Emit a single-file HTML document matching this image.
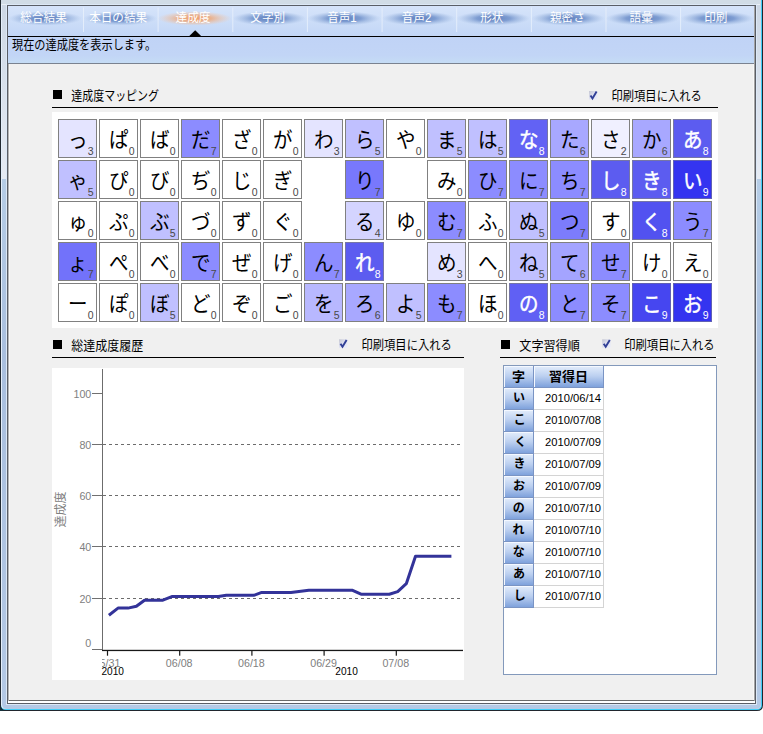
<!DOCTYPE html>
<html><head><meta charset="utf-8"><title>達成度</title><style>html,body{margin:0;padding:0;background:#fff;font-family:"Liberation Sans",sans-serif;}.j{font-family:"Liberation Sans","Noto Sans CJK JP",sans-serif;}</style></head><body><svg width="763" height="734" viewBox="0 0 763 734" style="display:block"><defs><linearGradient id="frv" gradientUnits="userSpaceOnUse" x1="0" y1="0" x2="0" y2="711"><stop offset="0" stop-color="#ccd7e5"/><stop offset="0.2517" stop-color="#e6ebf3"/><stop offset="0.2518" stop-color="#b6cde6"/><stop offset="0.5" stop-color="#a9bfde"/><stop offset="1" stop-color="#b4c9e5"/></linearGradient><linearGradient id="tabbg" x1="0" y1="0" x2="0" y2="1"><stop offset="0" stop-color="#d6e4fa"/><stop offset="1" stop-color="#c2d6f6"/></linearGradient><linearGradient id="infobg" x1="0" y1="0" x2="0" y2="1"><stop offset="0" stop-color="#c0d3f6"/><stop offset="0.7" stop-color="#c2d5f6"/><stop offset="1" stop-color="#c5dcf5"/></linearGradient><radialGradient id="glowb"><stop offset="0" stop-color="#5878b8" stop-opacity="0.95"/><stop offset="0.45" stop-color="#6a8cc8" stop-opacity="0.8"/><stop offset="0.8" stop-color="#90acd8" stop-opacity="0.35"/><stop offset="1" stop-color="#a8c0e8" stop-opacity="0"/></radialGradient><radialGradient id="glowo"><stop offset="0" stop-color="#f09860" stop-opacity="0.95"/><stop offset="0.45" stop-color="#f0a878" stop-opacity="0.8"/><stop offset="0.8" stop-color="#f0c0a0" stop-opacity="0.35"/><stop offset="1" stop-color="#f0c8b0" stop-opacity="0"/></radialGradient><linearGradient id="cb589" x1="0" y1="0" x2="1" y2="1"><stop offset="0" stop-color="#c4c6d2"/><stop offset="0.5" stop-color="#e0e2f2"/><stop offset="1" stop-color="#eceefa"/></linearGradient><linearGradient id="cb339" x1="0" y1="0" x2="1" y2="1"><stop offset="0" stop-color="#c4c6d2"/><stop offset="0.5" stop-color="#e0e2f2"/><stop offset="1" stop-color="#eceefa"/></linearGradient><linearGradient id="cb602" x1="0" y1="0" x2="1" y2="1"><stop offset="0" stop-color="#c4c6d2"/><stop offset="0.5" stop-color="#e0e2f2"/><stop offset="1" stop-color="#eceefa"/></linearGradient><linearGradient id="hd" x1="0" y1="0" x2="0" y2="1"><stop offset="0" stop-color="#dfeafa"/><stop offset="0.45" stop-color="#bcd0f0"/><stop offset="1" stop-color="#7fa2dc"/></linearGradient></defs><rect x="0" y="0" width="763" height="734" fill="#fff"/><rect x="0" y="704" width="7" height="7" fill="#17343e"/><path d="M0 0 H763 V705 Q763 711 757 711 H6 Q0 711 0 705 Z" fill="#20262e"/><path d="M1 0 H762 V705 Q762 710 757 710 H6 Q1 710 1 705 Z" fill="#40cdf6"/><path d="M1 0 H761 V704.5 Q761 709 756.5 709 H6 Q1 709 1 704.5 Z" fill="#e4eefa"/><path d="M2 0 H761 V704 Q761 709 756 709 H7 Q2 709 2 704 Z" fill="url(#frv)"/><rect x="0" y="0" width="1" height="705" fill="#222a32"/><rect x="1" y="0" width="760" height="4" fill="#d1dce6"/><rect x="2" y="4" width="758" height="1" fill="#e9eff5"/><rect x="6" y="4" width="751" height="701" fill="#dce8f6"/><rect x="7" y="5" width="749" height="699" fill="#5a5e66"/><rect x="8" y="6" width="747" height="697" fill="#fff"/><rect x="8" y="6" width="747" height="694" fill="#f0f0f0"/><rect x="8" y="700" width="747" height="1" fill="#6a6a6a"/><rect x="8" y="6" width="1" height="695" fill="#b4b4b4"/><rect x="9" y="64" width="1" height="636" fill="#f8f8f8"/><rect x="754" y="6" width="1" height="695" fill="#a4a4a4"/><rect x="753" y="64" width="1" height="636" fill="#f8f8f8"/><rect x="8" y="6" width="746" height="30" fill="url(#tabbg)"/><rect x="8" y="36" width="746" height="1" fill="#000"/><rect x="8" y="37" width="746" height="26" fill="url(#infobg)"/><rect x="8" y="63" width="746" height="1" fill="#7a8290"/><ellipse cx="45.4" cy="18.4" rx="37" ry="7.2" fill="url(#glowb)"/><text class="j" transform="translate(20.33,22.40) scale(0.9677,1)" font-size="12" fill="#fff">総合結果</text><rect x="83.0" y="7.5" width="1" height="24.5" fill="#e8f0fc" opacity="0.85"/><ellipse cx="120.1" cy="18.4" rx="37" ry="7.2" fill="url(#glowb)"/><text class="j" transform="translate(89.15,22.40) scale(0.9677,1)" font-size="12" fill="#fff">本日の結果</text><rect x="157.6" y="7.5" width="1" height="24.5" fill="#e8f0fc" opacity="0.85"/><ellipse cx="194.7" cy="18.4" rx="37" ry="7.2" fill="url(#glowo)"/><text class="j" transform="translate(175.62,22.40) scale(0.9677,1)" font-size="12" fill="#fff">達成度</text><rect x="232.3" y="7.5" width="1" height="24.5" fill="#e8f0fc" opacity="0.85"/><ellipse cx="269.4" cy="18.4" rx="37" ry="7.2" fill="url(#glowb)"/><text class="j" transform="translate(250.28,22.40) scale(0.9677,1)" font-size="12" fill="#fff">文字別</text><rect x="306.9" y="7.5" width="1" height="24.5" fill="#e8f0fc" opacity="0.85"/><ellipse cx="344.0" cy="18.4" rx="37" ry="7.2" fill="url(#glowb)"/><text class="j" transform="translate(327.15,22.40) scale(0.9677,1)" font-size="12" fill="#fff">音声1</text><rect x="381.6" y="7.5" width="1" height="24.5" fill="#e8f0fc" opacity="0.85"/><ellipse cx="418.7" cy="18.4" rx="37" ry="7.2" fill="url(#glowb)"/><text class="j" transform="translate(401.80,22.40) scale(0.9677,1)" font-size="12" fill="#fff">音声2</text><rect x="456.2" y="7.5" width="1" height="24.5" fill="#e8f0fc" opacity="0.85"/><ellipse cx="493.3" cy="18.4" rx="37" ry="7.2" fill="url(#glowb)"/><text class="j" transform="translate(480.23,22.40) scale(0.9677,1)" font-size="12" fill="#fff">形状</text><rect x="530.9" y="7.5" width="1" height="24.5" fill="#e8f0fc" opacity="0.85"/><ellipse cx="568.0" cy="18.4" rx="37" ry="7.2" fill="url(#glowb)"/><text class="j" transform="translate(549.96,22.40) scale(0.9677,1)" font-size="12" fill="#fff">親密さ</text><rect x="605.5" y="7.5" width="1" height="24.5" fill="#e8f0fc" opacity="0.85"/><ellipse cx="642.6" cy="18.4" rx="37" ry="7.2" fill="url(#glowb)"/><text class="j" transform="translate(629.53,22.40) scale(0.9677,1)" font-size="12" fill="#fff">語彙</text><rect x="680.1" y="7.5" width="1" height="24.5" fill="#e8f0fc" opacity="0.85"/><ellipse cx="717.3" cy="18.4" rx="37" ry="7.2" fill="url(#glowb)"/><text class="j" transform="translate(704.18,22.40) scale(0.9677,1)" font-size="12" fill="#fff">印刷</text><path d="M189.3 36 L195.2 30.3 L201.1 36 Z" fill="#000"/><text class="j" transform="translate(12.00,48.80) scale(0.8886,1)" font-size="12.6" fill="#000">現在の達成度を表示します。</text><rect x="53" y="90" width="9" height="9" fill="#000"/><text class="j" transform="translate(71.30,99.50) scale(0.8436,1)" font-size="13" fill="#000">達成度マッピング</text><rect x="589" y="91" width="8.4" height="8.5" fill="url(#cb589)"/><path d="M590.5 95.4 L592.5 98.5 L596.6 91.6" fill="none" stroke="#303f96" stroke-width="1.9"/><text class="j" transform="translate(611.50,100.40) scale(0.8967,1)" font-size="12.6" fill="#000">印刷項目に入れる</text><rect x="52" y="107" width="666" height="1" fill="#000"/><rect x="52" y="112" width="666" height="216" fill="#fff"/><rect x="58.5" y="119.5" width="38" height="38" fill="#e4e4ff" stroke="#808080" stroke-width="1"/><text class="j" transform="translate(68.03,146.68) scale(0.9300,1)" font-size="21" fill="#000">っ</text><text x="93.5" y="154.5" font-size="10.5" text-anchor="end" fill="#484848" font-family="Liberation Sans, sans-serif">3</text><rect x="99.5" y="119.5" width="38" height="38" fill="#ffffff" stroke="#808080" stroke-width="1"/><text class="j" transform="translate(109.03,147.47) scale(0.9300,1)" font-size="21" fill="#000">ぱ</text><text x="134.5" y="154.5" font-size="10.5" text-anchor="end" fill="#484848" font-family="Liberation Sans, sans-serif">0</text><rect x="140.5" y="119.5" width="38" height="38" fill="#ffffff" stroke="#808080" stroke-width="1"/><text class="j" transform="translate(150.04,147.47) scale(0.9300,1)" font-size="21" fill="#000">ば</text><text x="175.5" y="154.5" font-size="10.5" text-anchor="end" fill="#484848" font-family="Liberation Sans, sans-serif">0</text><rect x="181.5" y="119.5" width="38" height="38" fill="#8c8cff" stroke="#808080" stroke-width="1"/><text class="j" transform="translate(191.04,147.47) scale(0.9300,1)" font-size="21" fill="#000">だ</text><text x="216.5" y="154.5" font-size="10.5" text-anchor="end" fill="#484848" font-family="Liberation Sans, sans-serif">7</text><rect x="222.5" y="119.5" width="38" height="38" fill="#ffffff" stroke="#808080" stroke-width="1"/><text class="j" transform="translate(232.04,147.47) scale(0.9300,1)" font-size="21" fill="#000">ざ</text><text x="257.5" y="154.5" font-size="10.5" text-anchor="end" fill="#484848" font-family="Liberation Sans, sans-serif">0</text><rect x="263.5" y="119.5" width="38" height="38" fill="#ffffff" stroke="#808080" stroke-width="1"/><text class="j" transform="translate(273.04,147.47) scale(0.9300,1)" font-size="21" fill="#000">が</text><text x="298.5" y="154.5" font-size="10.5" text-anchor="end" fill="#484848" font-family="Liberation Sans, sans-serif">0</text><rect x="304.5" y="119.5" width="38" height="38" fill="#e4e4ff" stroke="#808080" stroke-width="1"/><text class="j" transform="translate(314.04,147.47) scale(0.9300,1)" font-size="21" fill="#000">わ</text><text x="339.5" y="154.5" font-size="10.5" text-anchor="end" fill="#484848" font-family="Liberation Sans, sans-serif">3</text><rect x="345.5" y="119.5" width="38" height="38" fill="#c0c0ff" stroke="#808080" stroke-width="1"/><text class="j" transform="translate(355.04,147.47) scale(0.9300,1)" font-size="21" fill="#000">ら</text><text x="380.5" y="154.5" font-size="10.5" text-anchor="end" fill="#484848" font-family="Liberation Sans, sans-serif">5</text><rect x="386.5" y="119.5" width="38" height="38" fill="#ffffff" stroke="#808080" stroke-width="1"/><text class="j" transform="translate(396.04,147.47) scale(0.9300,1)" font-size="21" fill="#000">や</text><text x="421.5" y="154.5" font-size="10.5" text-anchor="end" fill="#484848" font-family="Liberation Sans, sans-serif">0</text><rect x="427.5" y="119.5" width="38" height="38" fill="#c0c0ff" stroke="#808080" stroke-width="1"/><text class="j" transform="translate(437.04,147.47) scale(0.9300,1)" font-size="21" fill="#000">ま</text><text x="462.5" y="154.5" font-size="10.5" text-anchor="end" fill="#484848" font-family="Liberation Sans, sans-serif">5</text><rect x="468.5" y="119.5" width="38" height="38" fill="#c0c0ff" stroke="#808080" stroke-width="1"/><text class="j" transform="translate(478.04,147.47) scale(0.9300,1)" font-size="21" fill="#000">は</text><text x="503.5" y="154.5" font-size="10.5" text-anchor="end" fill="#484848" font-family="Liberation Sans, sans-serif">5</text><rect x="509.5" y="119.5" width="38" height="38" fill="#6262f4" stroke="#7676a6" stroke-width="1"/><text class="j" transform="translate(519.03,147.47) scale(0.9300,1)" font-size="21" fill="#fff" stroke="#fff" stroke-width="0.45">な</text><text x="544.5" y="154.5" font-size="10.5" text-anchor="end" fill="#ffffff" font-family="Liberation Sans, sans-serif">8</text><rect x="550.5" y="119.5" width="38" height="38" fill="#a8a8ff" stroke="#808080" stroke-width="1"/><text class="j" transform="translate(560.03,147.47) scale(0.9300,1)" font-size="21" fill="#000">た</text><text x="585.5" y="154.5" font-size="10.5" text-anchor="end" fill="#484848" font-family="Liberation Sans, sans-serif">6</text><rect x="591.5" y="119.5" width="38" height="38" fill="#f0f0ff" stroke="#808080" stroke-width="1"/><text class="j" transform="translate(601.03,147.47) scale(0.9300,1)" font-size="21" fill="#000">さ</text><text x="626.5" y="154.5" font-size="10.5" text-anchor="end" fill="#484848" font-family="Liberation Sans, sans-serif">2</text><rect x="632.5" y="119.5" width="38" height="38" fill="#a8a8ff" stroke="#808080" stroke-width="1"/><text class="j" transform="translate(642.03,147.47) scale(0.9300,1)" font-size="21" fill="#000">か</text><text x="667.5" y="154.5" font-size="10.5" text-anchor="end" fill="#484848" font-family="Liberation Sans, sans-serif">6</text><rect x="673.5" y="119.5" width="38" height="38" fill="#5c5cf0" stroke="#7676a6" stroke-width="1"/><text class="j" transform="translate(683.03,147.47) scale(0.9300,1)" font-size="21" fill="#fff" stroke="#fff" stroke-width="0.45">あ</text><text x="708.5" y="154.5" font-size="10.5" text-anchor="end" fill="#ffffff" font-family="Liberation Sans, sans-serif">8</text><rect x="58.5" y="160.5" width="38" height="38" fill="#c0c0ff" stroke="#808080" stroke-width="1"/><text class="j" transform="translate(68.03,187.68) scale(0.9300,1)" font-size="21" fill="#000">ゃ</text><text x="93.5" y="195.5" font-size="10.5" text-anchor="end" fill="#484848" font-family="Liberation Sans, sans-serif">5</text><rect x="99.5" y="160.5" width="38" height="38" fill="#ffffff" stroke="#808080" stroke-width="1"/><text class="j" transform="translate(109.03,188.47) scale(0.9300,1)" font-size="21" fill="#000">ぴ</text><text x="134.5" y="195.5" font-size="10.5" text-anchor="end" fill="#484848" font-family="Liberation Sans, sans-serif">0</text><rect x="140.5" y="160.5" width="38" height="38" fill="#ffffff" stroke="#808080" stroke-width="1"/><text class="j" transform="translate(150.04,188.47) scale(0.9300,1)" font-size="21" fill="#000">び</text><text x="175.5" y="195.5" font-size="10.5" text-anchor="end" fill="#484848" font-family="Liberation Sans, sans-serif">0</text><rect x="181.5" y="160.5" width="38" height="38" fill="#ffffff" stroke="#808080" stroke-width="1"/><text class="j" transform="translate(191.04,188.47) scale(0.9300,1)" font-size="21" fill="#000">ぢ</text><text x="216.5" y="195.5" font-size="10.5" text-anchor="end" fill="#484848" font-family="Liberation Sans, sans-serif">0</text><rect x="222.5" y="160.5" width="38" height="38" fill="#ffffff" stroke="#808080" stroke-width="1"/><text class="j" transform="translate(232.04,188.47) scale(0.9300,1)" font-size="21" fill="#000">じ</text><text x="257.5" y="195.5" font-size="10.5" text-anchor="end" fill="#484848" font-family="Liberation Sans, sans-serif">0</text><rect x="263.5" y="160.5" width="38" height="38" fill="#ffffff" stroke="#808080" stroke-width="1"/><text class="j" transform="translate(273.04,188.47) scale(0.9300,1)" font-size="21" fill="#000">ぎ</text><text x="298.5" y="195.5" font-size="10.5" text-anchor="end" fill="#484848" font-family="Liberation Sans, sans-serif">0</text><rect x="345.5" y="160.5" width="38" height="38" fill="#7878fc" stroke="#808080" stroke-width="1"/><text class="j" transform="translate(355.04,188.47) scale(0.9300,1)" font-size="21" fill="#000">り</text><text x="380.5" y="195.5" font-size="10.5" text-anchor="end" fill="#484848" font-family="Liberation Sans, sans-serif">7</text><rect x="427.5" y="160.5" width="38" height="38" fill="#ffffff" stroke="#808080" stroke-width="1"/><text class="j" transform="translate(437.04,188.47) scale(0.9300,1)" font-size="21" fill="#000">み</text><text x="462.5" y="195.5" font-size="10.5" text-anchor="end" fill="#484848" font-family="Liberation Sans, sans-serif">0</text><rect x="468.5" y="160.5" width="38" height="38" fill="#8c8cff" stroke="#808080" stroke-width="1"/><text class="j" transform="translate(478.04,188.47) scale(0.9300,1)" font-size="21" fill="#000">ひ</text><text x="503.5" y="195.5" font-size="10.5" text-anchor="end" fill="#484848" font-family="Liberation Sans, sans-serif">7</text><rect x="509.5" y="160.5" width="38" height="38" fill="#8c8cff" stroke="#808080" stroke-width="1"/><text class="j" transform="translate(519.03,188.47) scale(0.9300,1)" font-size="21" fill="#000">に</text><text x="544.5" y="195.5" font-size="10.5" text-anchor="end" fill="#484848" font-family="Liberation Sans, sans-serif">7</text><rect x="550.5" y="160.5" width="38" height="38" fill="#8c8cff" stroke="#808080" stroke-width="1"/><text class="j" transform="translate(560.03,188.47) scale(0.9300,1)" font-size="21" fill="#000">ち</text><text x="585.5" y="195.5" font-size="10.5" text-anchor="end" fill="#484848" font-family="Liberation Sans, sans-serif">7</text><rect x="591.5" y="160.5" width="38" height="38" fill="#5c5cf0" stroke="#7676a6" stroke-width="1"/><text class="j" transform="translate(601.03,188.47) scale(0.9300,1)" font-size="21" fill="#fff" stroke="#fff" stroke-width="0.45">し</text><text x="626.5" y="195.5" font-size="10.5" text-anchor="end" fill="#ffffff" font-family="Liberation Sans, sans-serif">8</text><rect x="632.5" y="160.5" width="38" height="38" fill="#5c5cf0" stroke="#7676a6" stroke-width="1"/><text class="j" transform="translate(642.03,188.47) scale(0.9300,1)" font-size="21" fill="#fff" stroke="#fff" stroke-width="0.45">き</text><text x="667.5" y="195.5" font-size="10.5" text-anchor="end" fill="#ffffff" font-family="Liberation Sans, sans-serif">8</text><rect x="673.5" y="160.5" width="38" height="38" fill="#3434f0" stroke="#6060b4" stroke-width="1"/><text class="j" transform="translate(683.03,188.47) scale(0.9300,1)" font-size="21" fill="#fff" stroke="#fff" stroke-width="0.45">い</text><text x="708.5" y="195.5" font-size="10.5" text-anchor="end" fill="#ffffff" font-family="Liberation Sans, sans-serif">9</text><rect x="58.5" y="201.5" width="38" height="38" fill="#ffffff" stroke="#808080" stroke-width="1"/><text class="j" transform="translate(68.03,228.68) scale(0.9300,1)" font-size="21" fill="#000">ゅ</text><text x="93.5" y="236.5" font-size="10.5" text-anchor="end" fill="#484848" font-family="Liberation Sans, sans-serif">0</text><rect x="99.5" y="201.5" width="38" height="38" fill="#ffffff" stroke="#808080" stroke-width="1"/><text class="j" transform="translate(109.03,229.47) scale(0.9300,1)" font-size="21" fill="#000">ぷ</text><text x="134.5" y="236.5" font-size="10.5" text-anchor="end" fill="#484848" font-family="Liberation Sans, sans-serif">0</text><rect x="140.5" y="201.5" width="38" height="38" fill="#c0c0ff" stroke="#808080" stroke-width="1"/><text class="j" transform="translate(150.04,229.47) scale(0.9300,1)" font-size="21" fill="#000">ぶ</text><text x="175.5" y="236.5" font-size="10.5" text-anchor="end" fill="#484848" font-family="Liberation Sans, sans-serif">5</text><rect x="181.5" y="201.5" width="38" height="38" fill="#ffffff" stroke="#808080" stroke-width="1"/><text class="j" transform="translate(191.04,229.47) scale(0.9300,1)" font-size="21" fill="#000">づ</text><text x="216.5" y="236.5" font-size="10.5" text-anchor="end" fill="#484848" font-family="Liberation Sans, sans-serif">0</text><rect x="222.5" y="201.5" width="38" height="38" fill="#ffffff" stroke="#808080" stroke-width="1"/><text class="j" transform="translate(232.04,229.47) scale(0.9300,1)" font-size="21" fill="#000">ず</text><text x="257.5" y="236.5" font-size="10.5" text-anchor="end" fill="#484848" font-family="Liberation Sans, sans-serif">0</text><rect x="263.5" y="201.5" width="38" height="38" fill="#ffffff" stroke="#808080" stroke-width="1"/><text class="j" transform="translate(273.04,229.47) scale(0.9300,1)" font-size="21" fill="#000">ぐ</text><text x="298.5" y="236.5" font-size="10.5" text-anchor="end" fill="#484848" font-family="Liberation Sans, sans-serif">0</text><rect x="345.5" y="201.5" width="38" height="38" fill="#d4d4ff" stroke="#808080" stroke-width="1"/><text class="j" transform="translate(355.04,229.47) scale(0.9300,1)" font-size="21" fill="#000">る</text><text x="380.5" y="236.5" font-size="10.5" text-anchor="end" fill="#484848" font-family="Liberation Sans, sans-serif">4</text><rect x="386.5" y="201.5" width="38" height="38" fill="#ffffff" stroke="#808080" stroke-width="1"/><text class="j" transform="translate(396.04,229.47) scale(0.9300,1)" font-size="21" fill="#000">ゆ</text><text x="421.5" y="236.5" font-size="10.5" text-anchor="end" fill="#484848" font-family="Liberation Sans, sans-serif">0</text><rect x="427.5" y="201.5" width="38" height="38" fill="#8c8cff" stroke="#808080" stroke-width="1"/><text class="j" transform="translate(437.04,229.47) scale(0.9300,1)" font-size="21" fill="#000">む</text><text x="462.5" y="236.5" font-size="10.5" text-anchor="end" fill="#484848" font-family="Liberation Sans, sans-serif">7</text><rect x="468.5" y="201.5" width="38" height="38" fill="#ffffff" stroke="#808080" stroke-width="1"/><text class="j" transform="translate(478.04,229.47) scale(0.9300,1)" font-size="21" fill="#000">ふ</text><text x="503.5" y="236.5" font-size="10.5" text-anchor="end" fill="#484848" font-family="Liberation Sans, sans-serif">0</text><rect x="509.5" y="201.5" width="38" height="38" fill="#c0c0ff" stroke="#808080" stroke-width="1"/><text class="j" transform="translate(519.03,229.47) scale(0.9300,1)" font-size="21" fill="#000">ぬ</text><text x="544.5" y="236.5" font-size="10.5" text-anchor="end" fill="#484848" font-family="Liberation Sans, sans-serif">5</text><rect x="550.5" y="201.5" width="38" height="38" fill="#7c7cfc" stroke="#808080" stroke-width="1"/><text class="j" transform="translate(560.03,229.47) scale(0.9300,1)" font-size="21" fill="#000">つ</text><text x="585.5" y="236.5" font-size="10.5" text-anchor="end" fill="#484848" font-family="Liberation Sans, sans-serif">7</text><rect x="591.5" y="201.5" width="38" height="38" fill="#ffffff" stroke="#808080" stroke-width="1"/><text class="j" transform="translate(601.03,229.47) scale(0.9300,1)" font-size="21" fill="#000">す</text><text x="626.5" y="236.5" font-size="10.5" text-anchor="end" fill="#484848" font-family="Liberation Sans, sans-serif">0</text><rect x="632.5" y="201.5" width="38" height="38" fill="#5252f0" stroke="#7676a6" stroke-width="1"/><text class="j" transform="translate(642.03,229.47) scale(0.9300,1)" font-size="21" fill="#fff" stroke="#fff" stroke-width="0.45">く</text><text x="667.5" y="236.5" font-size="10.5" text-anchor="end" fill="#ffffff" font-family="Liberation Sans, sans-serif">8</text><rect x="673.5" y="201.5" width="38" height="38" fill="#8c8cff" stroke="#808080" stroke-width="1"/><text class="j" transform="translate(683.03,229.47) scale(0.9300,1)" font-size="21" fill="#000">う</text><text x="708.5" y="236.5" font-size="10.5" text-anchor="end" fill="#484848" font-family="Liberation Sans, sans-serif">7</text><rect x="58.5" y="242.5" width="38" height="38" fill="#7272fa" stroke="#808080" stroke-width="1"/><text class="j" transform="translate(68.03,269.68) scale(0.9300,1)" font-size="21" fill="#000">ょ</text><text x="93.5" y="277.5" font-size="10.5" text-anchor="end" fill="#484848" font-family="Liberation Sans, sans-serif">7</text><rect x="99.5" y="242.5" width="38" height="38" fill="#ffffff" stroke="#808080" stroke-width="1"/><text class="j" transform="translate(109.03,270.48) scale(0.9300,1)" font-size="21" fill="#000">ぺ</text><text x="134.5" y="277.5" font-size="10.5" text-anchor="end" fill="#484848" font-family="Liberation Sans, sans-serif">0</text><rect x="140.5" y="242.5" width="38" height="38" fill="#ffffff" stroke="#808080" stroke-width="1"/><text class="j" transform="translate(150.04,270.48) scale(0.9300,1)" font-size="21" fill="#000">べ</text><text x="175.5" y="277.5" font-size="10.5" text-anchor="end" fill="#484848" font-family="Liberation Sans, sans-serif">0</text><rect x="181.5" y="242.5" width="38" height="38" fill="#8c8cff" stroke="#808080" stroke-width="1"/><text class="j" transform="translate(191.04,270.48) scale(0.9300,1)" font-size="21" fill="#000">で</text><text x="216.5" y="277.5" font-size="10.5" text-anchor="end" fill="#484848" font-family="Liberation Sans, sans-serif">7</text><rect x="222.5" y="242.5" width="38" height="38" fill="#ffffff" stroke="#808080" stroke-width="1"/><text class="j" transform="translate(232.04,270.48) scale(0.9300,1)" font-size="21" fill="#000">ぜ</text><text x="257.5" y="277.5" font-size="10.5" text-anchor="end" fill="#484848" font-family="Liberation Sans, sans-serif">0</text><rect x="263.5" y="242.5" width="38" height="38" fill="#ffffff" stroke="#808080" stroke-width="1"/><text class="j" transform="translate(273.04,270.48) scale(0.9300,1)" font-size="21" fill="#000">げ</text><text x="298.5" y="277.5" font-size="10.5" text-anchor="end" fill="#484848" font-family="Liberation Sans, sans-serif">0</text><rect x="304.5" y="242.5" width="38" height="38" fill="#8c8cff" stroke="#808080" stroke-width="1"/><text class="j" transform="translate(314.04,270.48) scale(0.9300,1)" font-size="21" fill="#000">ん</text><text x="339.5" y="277.5" font-size="10.5" text-anchor="end" fill="#484848" font-family="Liberation Sans, sans-serif">7</text><rect x="345.5" y="242.5" width="38" height="38" fill="#5c5cf0" stroke="#7676a6" stroke-width="1"/><text class="j" transform="translate(355.04,270.48) scale(0.9300,1)" font-size="21" fill="#fff" stroke="#fff" stroke-width="0.45">れ</text><text x="380.5" y="277.5" font-size="10.5" text-anchor="end" fill="#ffffff" font-family="Liberation Sans, sans-serif">8</text><rect x="427.5" y="242.5" width="38" height="38" fill="#e4e4ff" stroke="#808080" stroke-width="1"/><text class="j" transform="translate(437.04,270.48) scale(0.9300,1)" font-size="21" fill="#000">め</text><text x="462.5" y="277.5" font-size="10.5" text-anchor="end" fill="#484848" font-family="Liberation Sans, sans-serif">3</text><rect x="468.5" y="242.5" width="38" height="38" fill="#ffffff" stroke="#808080" stroke-width="1"/><text class="j" transform="translate(478.04,270.48) scale(0.9300,1)" font-size="21" fill="#000">へ</text><text x="503.5" y="277.5" font-size="10.5" text-anchor="end" fill="#484848" font-family="Liberation Sans, sans-serif">0</text><rect x="509.5" y="242.5" width="38" height="38" fill="#c0c0ff" stroke="#808080" stroke-width="1"/><text class="j" transform="translate(519.03,270.48) scale(0.9300,1)" font-size="21" fill="#000">ね</text><text x="544.5" y="277.5" font-size="10.5" text-anchor="end" fill="#484848" font-family="Liberation Sans, sans-serif">5</text><rect x="550.5" y="242.5" width="38" height="38" fill="#a4a4ff" stroke="#808080" stroke-width="1"/><text class="j" transform="translate(560.03,270.48) scale(0.9300,1)" font-size="21" fill="#000">て</text><text x="585.5" y="277.5" font-size="10.5" text-anchor="end" fill="#484848" font-family="Liberation Sans, sans-serif">6</text><rect x="591.5" y="242.5" width="38" height="38" fill="#8c8cff" stroke="#808080" stroke-width="1"/><text class="j" transform="translate(601.03,270.48) scale(0.9300,1)" font-size="21" fill="#000">せ</text><text x="626.5" y="277.5" font-size="10.5" text-anchor="end" fill="#484848" font-family="Liberation Sans, sans-serif">7</text><rect x="632.5" y="242.5" width="38" height="38" fill="#ffffff" stroke="#808080" stroke-width="1"/><text class="j" transform="translate(642.03,270.48) scale(0.9300,1)" font-size="21" fill="#000">け</text><text x="667.5" y="277.5" font-size="10.5" text-anchor="end" fill="#484848" font-family="Liberation Sans, sans-serif">0</text><rect x="673.5" y="242.5" width="38" height="38" fill="#ffffff" stroke="#808080" stroke-width="1"/><text class="j" transform="translate(683.03,270.48) scale(0.9300,1)" font-size="21" fill="#000">え</text><text x="708.5" y="277.5" font-size="10.5" text-anchor="end" fill="#484848" font-family="Liberation Sans, sans-serif">0</text><rect x="58.5" y="283.5" width="38" height="38" fill="#ffffff" stroke="#808080" stroke-width="1"/><text class="j" transform="translate(68.03,311.48) scale(0.9300,1)" font-size="21" fill="#000">ー</text><text x="93.5" y="318.5" font-size="10.5" text-anchor="end" fill="#484848" font-family="Liberation Sans, sans-serif">0</text><rect x="99.5" y="283.5" width="38" height="38" fill="#ffffff" stroke="#808080" stroke-width="1"/><text class="j" transform="translate(109.03,311.48) scale(0.9300,1)" font-size="21" fill="#000">ぽ</text><text x="134.5" y="318.5" font-size="10.5" text-anchor="end" fill="#484848" font-family="Liberation Sans, sans-serif">0</text><rect x="140.5" y="283.5" width="38" height="38" fill="#c0c0ff" stroke="#808080" stroke-width="1"/><text class="j" transform="translate(150.04,311.48) scale(0.9300,1)" font-size="21" fill="#000">ぼ</text><text x="175.5" y="318.5" font-size="10.5" text-anchor="end" fill="#484848" font-family="Liberation Sans, sans-serif">5</text><rect x="181.5" y="283.5" width="38" height="38" fill="#ffffff" stroke="#808080" stroke-width="1"/><text class="j" transform="translate(191.04,311.48) scale(0.9300,1)" font-size="21" fill="#000">ど</text><text x="216.5" y="318.5" font-size="10.5" text-anchor="end" fill="#484848" font-family="Liberation Sans, sans-serif">0</text><rect x="222.5" y="283.5" width="38" height="38" fill="#ffffff" stroke="#808080" stroke-width="1"/><text class="j" transform="translate(232.04,311.48) scale(0.9300,1)" font-size="21" fill="#000">ぞ</text><text x="257.5" y="318.5" font-size="10.5" text-anchor="end" fill="#484848" font-family="Liberation Sans, sans-serif">0</text><rect x="263.5" y="283.5" width="38" height="38" fill="#ffffff" stroke="#808080" stroke-width="1"/><text class="j" transform="translate(273.04,311.48) scale(0.9300,1)" font-size="21" fill="#000">ご</text><text x="298.5" y="318.5" font-size="10.5" text-anchor="end" fill="#484848" font-family="Liberation Sans, sans-serif">0</text><rect x="304.5" y="283.5" width="38" height="38" fill="#b8b8ff" stroke="#808080" stroke-width="1"/><text class="j" transform="translate(314.04,311.48) scale(0.9300,1)" font-size="21" fill="#000">を</text><text x="339.5" y="318.5" font-size="10.5" text-anchor="end" fill="#484848" font-family="Liberation Sans, sans-serif">5</text><rect x="345.5" y="283.5" width="38" height="38" fill="#a8a8ff" stroke="#808080" stroke-width="1"/><text class="j" transform="translate(355.04,311.48) scale(0.9300,1)" font-size="21" fill="#000">ろ</text><text x="380.5" y="318.5" font-size="10.5" text-anchor="end" fill="#484848" font-family="Liberation Sans, sans-serif">6</text><rect x="386.5" y="283.5" width="38" height="38" fill="#c0c0ff" stroke="#808080" stroke-width="1"/><text class="j" transform="translate(396.04,311.48) scale(0.9300,1)" font-size="21" fill="#000">よ</text><text x="421.5" y="318.5" font-size="10.5" text-anchor="end" fill="#484848" font-family="Liberation Sans, sans-serif">5</text><rect x="427.5" y="283.5" width="38" height="38" fill="#8c8cff" stroke="#808080" stroke-width="1"/><text class="j" transform="translate(437.04,311.48) scale(0.9300,1)" font-size="21" fill="#000">も</text><text x="462.5" y="318.5" font-size="10.5" text-anchor="end" fill="#484848" font-family="Liberation Sans, sans-serif">7</text><rect x="468.5" y="283.5" width="38" height="38" fill="#ffffff" stroke="#808080" stroke-width="1"/><text class="j" transform="translate(478.04,311.48) scale(0.9300,1)" font-size="21" fill="#000">ほ</text><text x="503.5" y="318.5" font-size="10.5" text-anchor="end" fill="#484848" font-family="Liberation Sans, sans-serif">0</text><rect x="509.5" y="283.5" width="38" height="38" fill="#6060f4" stroke="#7676a6" stroke-width="1"/><text class="j" transform="translate(519.03,311.48) scale(0.9300,1)" font-size="21" fill="#fff" stroke="#fff" stroke-width="0.45">の</text><text x="544.5" y="318.5" font-size="10.5" text-anchor="end" fill="#ffffff" font-family="Liberation Sans, sans-serif">8</text><rect x="550.5" y="283.5" width="38" height="38" fill="#8c8cff" stroke="#808080" stroke-width="1"/><text class="j" transform="translate(560.03,311.48) scale(0.9300,1)" font-size="21" fill="#000">と</text><text x="585.5" y="318.5" font-size="10.5" text-anchor="end" fill="#484848" font-family="Liberation Sans, sans-serif">7</text><rect x="591.5" y="283.5" width="38" height="38" fill="#8c8cff" stroke="#808080" stroke-width="1"/><text class="j" transform="translate(601.03,311.48) scale(0.9300,1)" font-size="21" fill="#000">そ</text><text x="626.5" y="318.5" font-size="10.5" text-anchor="end" fill="#484848" font-family="Liberation Sans, sans-serif">7</text><rect x="632.5" y="283.5" width="38" height="38" fill="#4646f0" stroke="#6060b4" stroke-width="1"/><text class="j" transform="translate(642.03,311.48) scale(0.9300,1)" font-size="21" fill="#fff" stroke="#fff" stroke-width="0.45">こ</text><text x="667.5" y="318.5" font-size="10.5" text-anchor="end" fill="#ffffff" font-family="Liberation Sans, sans-serif">9</text><rect x="673.5" y="283.5" width="38" height="38" fill="#3434f0" stroke="#6060b4" stroke-width="1"/><text class="j" transform="translate(683.03,311.48) scale(0.9300,1)" font-size="21" fill="#fff" stroke="#fff" stroke-width="0.45">お</text><text x="708.5" y="318.5" font-size="10.5" text-anchor="end" fill="#ffffff" font-family="Liberation Sans, sans-serif">9</text><rect x="53" y="340" width="9" height="9" fill="#000"/><text class="j" transform="translate(71.30,349.50) scale(0.9231,1)" font-size="13" fill="#000">総達成度履歴</text><rect x="339" y="339.3" width="8.4" height="8.5" fill="url(#cb339)"/><path d="M340.5 343.7 L342.5 346.8 L346.6 339.9" fill="none" stroke="#303f96" stroke-width="1.9"/><text class="j" transform="translate(361.50,348.70) scale(0.8967,1)" font-size="12.6" fill="#000">印刷項目に入れる</text><rect x="52" y="357" width="412" height="1" fill="#000"/><rect x="52" y="368" width="412" height="312" fill="#fff"/><rect x="102" y="369" width="1" height="282" fill="#6c6c6c"/><rect x="102" y="649.8" width="361" height="1.3" fill="#181818"/><rect x="92" y="393.0" width="10" height="1" fill="#707070"/><text x="91.3" y="397.6" font-size="10.7" text-anchor="end" fill="#808080" font-family="Liberation Sans, sans-serif">100</text><rect x="92" y="444.0" width="10" height="1" fill="#707070"/><line x1="103" y1="444.5" x2="461" y2="444.5" stroke="#6c6c6c" stroke-width="1" stroke-dasharray="3,3"/><text x="91.3" y="448.6" font-size="10.7" text-anchor="end" fill="#808080" font-family="Liberation Sans, sans-serif">80</text><rect x="92" y="495.0" width="10" height="1" fill="#707070"/><line x1="103" y1="495.5" x2="461" y2="495.5" stroke="#6c6c6c" stroke-width="1" stroke-dasharray="3,3"/><text x="91.3" y="499.6" font-size="10.7" text-anchor="end" fill="#808080" font-family="Liberation Sans, sans-serif">60</text><rect x="92" y="546.0" width="10" height="1" fill="#707070"/><line x1="103" y1="546.5" x2="461" y2="546.5" stroke="#6c6c6c" stroke-width="1" stroke-dasharray="3,3"/><text x="91.3" y="550.6" font-size="10.7" text-anchor="end" fill="#808080" font-family="Liberation Sans, sans-serif">40</text><rect x="92" y="598.0" width="10" height="1" fill="#707070"/><line x1="103" y1="598.5" x2="461" y2="598.5" stroke="#6c6c6c" stroke-width="1" stroke-dasharray="3,3"/><text x="91.3" y="602.6" font-size="10.7" text-anchor="end" fill="#808080" font-family="Liberation Sans, sans-serif">20</text><rect x="92" y="649.0" width="10" height="1" fill="#707070"/><text x="91.3" y="646.8" font-size="10.7" text-anchor="end" fill="#808080" font-family="Liberation Sans, sans-serif">0</text><clipPath id="cc"><rect x="102" y="367" width="362" height="313"/></clipPath><rect x="106.9" y="651" width="1.2" height="4.7" fill="#181818"/><text x="107.0" y="666.8" font-size="10.7" text-anchor="middle" fill="#808080" clip-path="url(#cc)" font-family="Liberation Sans, sans-serif">05/31</text><rect x="179.1" y="651" width="1.2" height="4.7" fill="#181818"/><text x="179.2" y="666.8" font-size="10.7" text-anchor="middle" fill="#808080" clip-path="url(#cc)" font-family="Liberation Sans, sans-serif">06/08</text><rect x="251.3" y="651" width="1.2" height="4.7" fill="#181818"/><text x="251.4" y="666.8" font-size="10.7" text-anchor="middle" fill="#808080" clip-path="url(#cc)" font-family="Liberation Sans, sans-serif">06/18</text><rect x="323.5" y="651" width="1.2" height="4.7" fill="#181818"/><text x="323.6" y="666.8" font-size="10.7" text-anchor="middle" fill="#808080" clip-path="url(#cc)" font-family="Liberation Sans, sans-serif">06/29</text><rect x="395.7" y="651" width="1.2" height="4.7" fill="#181818"/><text x="395.8" y="666.8" font-size="10.7" text-anchor="middle" fill="#808080" clip-path="url(#cc)" font-family="Liberation Sans, sans-serif">07/08</text><text x="101.5" y="674.7" font-size="10.7" fill="#000" textLength="22.5" lengthAdjust="spacingAndGlyphs" font-family="Liberation Sans, sans-serif">2010</text><text x="335.3" y="674.7" font-size="10.7" fill="#000" textLength="22.5" lengthAdjust="spacingAndGlyphs" font-family="Liberation Sans, sans-serif">2010</text><text class="j" transform="translate(64.6,527.6) rotate(-90)" font-size="12" fill="#808080">達成度</text><polyline fill="none" stroke="#333399" stroke-width="3" stroke-linejoin="round" points="108.9,615.2 118.0,608.1 128.0,608.1 136.4,606.3 144.5,600.2 162.9,600.2 171.8,596.6 218.4,596.6 226.3,595.3 253.8,595.3 261.7,592.4 291,592.4 308.8,590.3 352.6,590.3 361,594.2 389.3,594.2 397.7,591.6 406.3,583.7 415.5,556.2 451.4,556.2"/><rect x="501" y="340" width="9" height="9" fill="#000"/><text class="j" transform="translate(519.30,349.50) scale(0.9308,1)" font-size="13" fill="#000">文字習得順</text><rect x="602.2" y="339.3" width="8.4" height="8.5" fill="url(#cb602)"/><path d="M603.7 343.7 L605.7 346.8 L609.8 339.9" fill="none" stroke="#303f96" stroke-width="1.9"/><text class="j" transform="translate(624.30,348.70) scale(0.8967,1)" font-size="12.6" fill="#000">印刷項目に入れる</text><rect x="500" y="357" width="216" height="1" fill="#000"/><rect x="503.5" y="365.5" width="213" height="309" fill="#fff" stroke="#8399bb" stroke-width="1"/><rect x="504" y="366" width="30" height="22" fill="#7a94c4"/><rect x="504" y="366" width="29" height="21" fill="#f4f8ff"/><rect x="505" y="367" width="28" height="20" fill="url(#hd)"/><rect x="534" y="366" width="70" height="22" fill="#7a94c4"/><rect x="534" y="366" width="69" height="21" fill="#f4f8ff"/><rect x="535" y="367" width="68" height="20" fill="url(#hd)"/><text class="j" x="512.00" y="380.60" font-size="13" font-weight="bold" fill="#000">字</text><text class="j" x="549.00" y="380.60" font-size="13" font-weight="bold" fill="#000">習得日</text><rect x="504" y="388" width="30" height="22" fill="#7a94c4"/><rect x="504" y="388" width="29" height="21" fill="#f4f8ff"/><rect x="505" y="389" width="28" height="20" fill="url(#hd)"/><rect x="534" y="409" width="70" height="1" fill="#d4d4d4"/><rect x="603" y="388" width="1" height="22" fill="#d4d4d4"/><text class="j" x="512.92" y="402.30" font-size="12" font-weight="bold" fill="#000">い</text><text x="601" y="401.8" font-size="11.2" text-anchor="end" fill="#000" font-family="Liberation Sans, sans-serif">2010/06/14</text><rect x="504" y="410" width="30" height="22" fill="#7a94c4"/><rect x="504" y="410" width="29" height="21" fill="#f4f8ff"/><rect x="505" y="411" width="28" height="20" fill="url(#hd)"/><rect x="534" y="431" width="70" height="1" fill="#d4d4d4"/><rect x="603" y="410" width="1" height="22" fill="#d4d4d4"/><text class="j" x="513.76" y="424.30" font-size="12" font-weight="bold" fill="#000">こ</text><text x="601" y="423.8" font-size="11.2" text-anchor="end" fill="#000" font-family="Liberation Sans, sans-serif">2010/07/08</text><rect x="504" y="432" width="30" height="22" fill="#7a94c4"/><rect x="504" y="432" width="29" height="21" fill="#f4f8ff"/><rect x="505" y="433" width="28" height="20" fill="url(#hd)"/><rect x="534" y="453" width="70" height="1" fill="#d4d4d4"/><rect x="603" y="432" width="1" height="22" fill="#d4d4d4"/><text class="j" x="514.48" y="446.30" font-size="12" font-weight="bold" fill="#000">く</text><text x="601" y="445.8" font-size="11.2" text-anchor="end" fill="#000" font-family="Liberation Sans, sans-serif">2010/07/09</text><rect x="504" y="454" width="30" height="22" fill="#7a94c4"/><rect x="504" y="454" width="29" height="21" fill="#f4f8ff"/><rect x="505" y="455" width="28" height="20" fill="url(#hd)"/><rect x="534" y="475" width="70" height="1" fill="#d4d4d4"/><rect x="603" y="454" width="1" height="22" fill="#d4d4d4"/><text class="j" x="513.58" y="468.30" font-size="12" font-weight="bold" fill="#000">き</text><text x="601" y="467.8" font-size="11.2" text-anchor="end" fill="#000" font-family="Liberation Sans, sans-serif">2010/07/09</text><rect x="504" y="476" width="30" height="22" fill="#7a94c4"/><rect x="504" y="476" width="29" height="21" fill="#f4f8ff"/><rect x="505" y="477" width="28" height="20" fill="url(#hd)"/><rect x="534" y="497" width="70" height="1" fill="#d4d4d4"/><rect x="603" y="476" width="1" height="22" fill="#d4d4d4"/><text class="j" x="513.04" y="490.30" font-size="12" font-weight="bold" fill="#000">お</text><text x="601" y="489.8" font-size="11.2" text-anchor="end" fill="#000" font-family="Liberation Sans, sans-serif">2010/07/09</text><rect x="504" y="498" width="30" height="22" fill="#7a94c4"/><rect x="504" y="498" width="29" height="21" fill="#f4f8ff"/><rect x="505" y="499" width="28" height="20" fill="url(#hd)"/><rect x="534" y="519" width="70" height="1" fill="#d4d4d4"/><rect x="603" y="498" width="1" height="22" fill="#d4d4d4"/><text class="j" x="512.68" y="512.30" font-size="12" font-weight="bold" fill="#000">の</text><text x="601" y="511.8" font-size="11.2" text-anchor="end" fill="#000" font-family="Liberation Sans, sans-serif">2010/07/10</text><rect x="504" y="520" width="30" height="22" fill="#7a94c4"/><rect x="504" y="520" width="29" height="21" fill="#f4f8ff"/><rect x="505" y="521" width="28" height="20" fill="url(#hd)"/><rect x="534" y="541" width="70" height="1" fill="#d4d4d4"/><rect x="603" y="520" width="1" height="22" fill="#d4d4d4"/><text class="j" x="512.62" y="534.30" font-size="12" font-weight="bold" fill="#000">れ</text><text x="601" y="533.8" font-size="11.2" text-anchor="end" fill="#000" font-family="Liberation Sans, sans-serif">2010/07/10</text><rect x="504" y="542" width="30" height="22" fill="#7a94c4"/><rect x="504" y="542" width="29" height="21" fill="#f4f8ff"/><rect x="505" y="543" width="28" height="20" fill="url(#hd)"/><rect x="534" y="563" width="70" height="1" fill="#d4d4d4"/><rect x="603" y="542" width="1" height="22" fill="#d4d4d4"/><text class="j" x="512.80" y="556.30" font-size="12" font-weight="bold" fill="#000">な</text><text x="601" y="555.8" font-size="11.2" text-anchor="end" fill="#000" font-family="Liberation Sans, sans-serif">2010/07/10</text><rect x="504" y="564" width="30" height="22" fill="#7a94c4"/><rect x="504" y="564" width="29" height="21" fill="#f4f8ff"/><rect x="505" y="565" width="28" height="20" fill="url(#hd)"/><rect x="534" y="585" width="70" height="1" fill="#d4d4d4"/><rect x="603" y="564" width="1" height="22" fill="#d4d4d4"/><text class="j" x="512.98" y="578.30" font-size="12" font-weight="bold" fill="#000">あ</text><text x="601" y="577.8" font-size="11.2" text-anchor="end" fill="#000" font-family="Liberation Sans, sans-serif">2010/07/10</text><rect x="504" y="586" width="30" height="22" fill="#7a94c4"/><rect x="504" y="586" width="29" height="21" fill="#f4f8ff"/><rect x="505" y="587" width="28" height="20" fill="url(#hd)"/><rect x="534" y="607" width="70" height="1" fill="#d4d4d4"/><rect x="603" y="586" width="1" height="22" fill="#d4d4d4"/><text class="j" x="513.76" y="600.30" font-size="12" font-weight="bold" fill="#000">し</text><text x="601" y="599.8" font-size="11.2" text-anchor="end" fill="#000" font-family="Liberation Sans, sans-serif">2010/07/10</text></svg></body></html>
